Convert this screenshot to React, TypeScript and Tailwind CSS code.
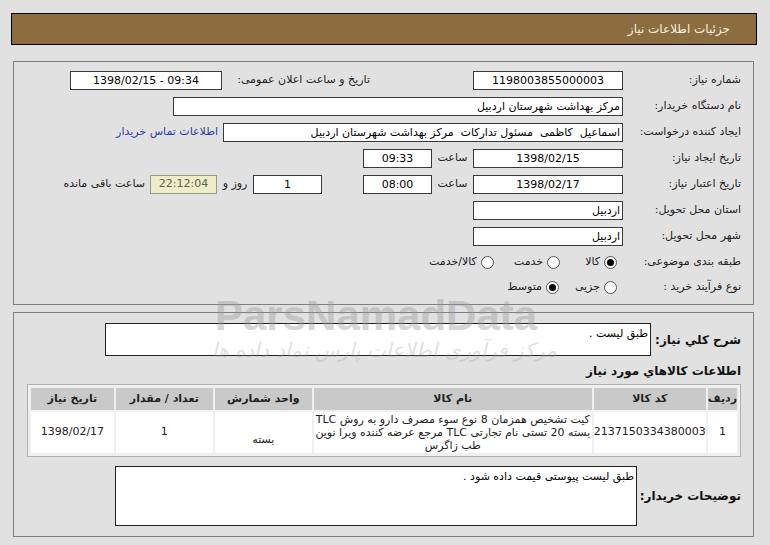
import React from "react";

const box = "h-[19px] border border-[#3a3a3a] bg-white flex items-center text-[11px] leading-none text-black";

const Label = ({ children, w = "w-[118px]" }: { children: React.ReactNode; w?: string }) => (
  <div className={`${w} shrink-0 text-right text-[11px] text-[#222]`}>{children}</div>
);

const Radio = ({ checked }: { checked?: boolean }) => (
  <span className="w-[13px] h-[13px] rounded-full border border-[#555] bg-white flex items-center justify-center shrink-0">
    {checked && <span className="w-[7px] h-[7px] rounded-full bg-black" />}
  </span>
);

const Row = ({ children, h = "h-[26px]" }: { children: React.ReactNode; h?: string }) => (
  <div className={`flex items-center ${h}`}>{children}</div>
);

export default function App() {
  return (
    <div
      dir="rtl"
      className="relative w-[770px] h-[545px] bg-[#e1e1e1] pt-[13px] overflow-hidden"
      style={{ fontFamily: 'Tahoma, "DejaVu Sans", sans-serif' }}
    >
      {/* header */}
      <div className="mr-[13px] ml-[11px] h-[32px] bg-[#8c6d40] border border-black flex items-center pr-[26px] text-[12px] text-[#f4efe6]">
        جزئیات اطلاعات نیاز
      </div>

      {/* main info panel */}
      <div className="mt-[16px] mr-[16px] ml-[13px] h-[244px] border border-[#7f7f7f] pt-[5px] pr-[12px]">
        <Row>
          <Label>شماره نیاز:</Label>
          <div className={`${box} w-[150px] justify-center`}>1198003855000003</div>
          <div className="w-[103px]" />
          <Label w="w-[148px]">تاریخ و ساعت اعلان عمومی:</Label>
          <div className={`${box} w-[152px] justify-center`}>
            <span dir="ltr">1398/02/15 - 09:34</span>
          </div>
        </Row>
        <Row>
          <Label>نام دستگاه خریدار:</Label>
          <div className={`${box} w-[450px] pr-[2px]`}>مرکز بهداشت شهرستان اردبیل</div>
        </Row>
        <Row>
          <Label>ایجاد کننده درخواست:</Label>
          <div className={`${box} w-[400px] pr-[2px] whitespace-pre`}>اسماعیل  کاظمی  مسئول تدارکات  مرکز بهداشت شهرستان اردبیل</div>
          <a className="mr-[5px] text-[11px] text-[#2b3fa8]">اطلاعات تماس خریدار</a>
        </Row>
        <Row>
          <Label>تاریخ ایجاد نیاز:</Label>
          <div className={`${box} w-[150px] justify-center`}>1398/02/15</div>
          <div className="w-[41px] text-center text-[11px] text-[#222]">ساعت</div>
          <div className={`${box} w-[69px] justify-center`}>09:33</div>
        </Row>
        <Row>
          <Label>تاریخ اعتبار نیاز:</Label>
          <div className={`${box} w-[150px] justify-center`}>1398/02/17</div>
          <div className="w-[41px] text-center text-[11px] text-[#222]">ساعت</div>
          <div className={`${box} w-[69px] justify-center`}>08:00</div>
          <div className="w-[41px]" />
          <div className={`${box} w-[69px] justify-center`}>1</div>
          <div className="w-[36px] text-center text-[11px] text-[#222]">روز و</div>
          <div className="h-[19px] w-[67px] border border-[#9a9a80] bg-[#efecc9] flex items-center justify-center text-[11px] text-[#62624a]">
            22:12:04
          </div>
          <div className="mr-[5px] text-[11px] text-[#222]">ساعت باقی مانده</div>
        </Row>
        <Row>
          <Label>استان محل تحویل:</Label>
          <div className={`${box} w-[150px] pr-[2px]`}>اردبیل</div>
        </Row>
        <Row>
          <Label>شهر محل تحویل:</Label>
          <div className={`${box} w-[150px] pr-[2px]`}>اردبیل</div>
        </Row>
        <Row>
          <Label>طبقه بندی موضوعی:</Label>
          <div className="flex items-center text-[11px] text-[#222] pr-[6px]">
            <Radio checked />
            <span className="mr-[4px]">کالا</span>
            <span className="mr-[25px]"><Radio /></span>
            <span className="mr-[4px]">خدمت</span>
            <span className="mr-[20px]"><Radio /></span>
            <span className="mr-[4px]">کالا/خدمت</span>
          </div>
        </Row>
        <Row h="h-[24px]">
          <Label>نوع فرآیند خرید :</Label>
          <div className="flex items-center text-[11px] text-[#222] pr-[6px]">
            <Radio />
            <span className="mr-[4px]">جزیی</span>
            <span className="mr-[16px]"><Radio checked /></span>
            <span className="mr-[4px]">متوسط</span>
          </div>
        </Row>
      </div>

      {/* items panel */}
      <div className="mt-[7px] mr-[16px] ml-[13px] h-[225px] border border-[#7f7f7f] pt-[10px] pr-[12px]">
        <div className="flex items-center">
          <div className="w-[90px] shrink-0 text-right text-[12px] font-bold text-[#111]">شرح کلي نياز:</div>
          <div className="h-[33px] w-[546px] border border-[#222] bg-white pr-[2px] pt-[2px] text-[11px] text-black">
            طبق لیست .
          </div>
        </div>
        <div className="mt-[5px] h-[20px] flex items-center text-[12px] font-bold text-[#111]">اطلاعات کالاهاي مورد نياز</div>
        <div className="mt-[3px] w-[714px] border border-[#b0b0b0] bg-[#f0f0f0] p-[1px]">
          <table className="w-full border-separate border-spacing-[2px] text-[11px] text-[#222]">
            <thead>
              <tr className="h-[22px] bg-[#c9c9c9] font-bold">
                <th className="w-[24px] font-bold">ردیف</th>
                <th className="w-[100px] font-bold">کد کالا</th>
                <th className="w-[278px] font-bold">نام کالا</th>
                <th className="w-[97px] font-bold">واحد شمارش</th>
                <th className="w-[97px] font-bold">تعداد / مقدار</th>
                <th className="font-bold">تاریخ نیاز</th>
              </tr>
            </thead>
            <tbody>
              <tr className="h-[41px] bg-white text-center">
                <td>1</td>
                <td>2137150334380003</td>
                <td className="leading-[13px]">
                  کیت تشخیص همزمان 8 نوع سوء مصرف دارو به روش TLC
                  <br />
                  بسته 20 تستی نام تجارتی TLC مرجع عرضه کننده ویرا نوین
                  <br />
                  طب زاگرس
                </td>
                <td className="pt-[16px]">بسته</td>
                <td>1</td>
                <td>1398/02/17</td>
              </tr>
            </tbody>
          </table>
        </div>
        <div className="mt-[9px] flex items-center">
          <div className="w-[104px] shrink-0 text-right text-[12px] font-bold text-[#111]">توضیحات خریدار:</div>
          <div className="h-[60px] w-[522px] border border-[#222] bg-white pr-[2px] pt-[2px] text-[11px] text-black">
            طبق لیست پیوستی قیمت داده شود .
          </div>
        </div>
      </div>

      {/* watermark */}
      <div
        className="pointer-events-none absolute left-[215px] top-[295px] text-[42px] leading-none font-bold text-[#9a9a9a] opacity-40"
        style={{ fontFamily: '"Liberation Sans", sans-serif' }}
        dir="ltr"
      >
        ParsNamadData
      </div>
      <div className="pointer-events-none absolute left-[212px] top-[340px] text-[20px] leading-none italic text-[#9a9a9a] opacity-30">
        مرکز فرآوری اطلاعات پارس نماد داده ها
      </div>
    </div>
  );
}
